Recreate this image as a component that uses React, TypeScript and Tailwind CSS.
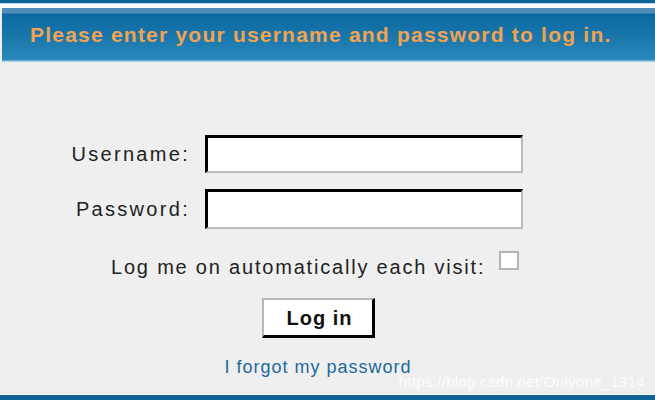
import React from 'react'

export default function App() {
    return (
        <div className="w-[655px] h-[400px] bg-[#efefef] flex flex-col overflow-hidden font-['Liberation_Sans',Arial,sans-serif]">
            {/* top rule */}
            <div className="h-[3px] bg-[#0e6399]" />
            <div className="h-[1px] bg-[#bcd6e8]" />
            <div className="h-[4px] bg-white" />

            {/* header */}
            <div className="h-[54px] ml-[2px] flex items-center pl-[28px] bg-[linear-gradient(to_bottom,#4f8db8_0px,#4f8db8_5px,#0b69a0_6px,#1a78ad_30px,#2b88bb_52px,#a9cfe6_53px)]">
                <h1 className="text-[21px] font-bold text-[#f3a250] tracking-[1.22px]">
                    Please enter your username and password to log in.
                </h1>
            </div>

            {/* form */}
            <div className="flex-1 flex flex-col pt-[73px]">
                <div className="grid grid-cols-[190px_318px] gap-x-[15px] gap-y-[16px] items-center">
                    <label className="text-right text-[20px] text-[#222] tracking-[2.3px]">Username:</label>
                    <input className="h-[38px] bg-white border-t-[3px] border-l-[3px] border-b-[2px] border-r-[2px] border-t-black border-l-black border-b-[#bbbbbb] border-r-[#bbbbbb] outline-none" />
                    <label className="text-right text-[20px] text-[#222] tracking-[2.3px]">Password:</label>
                    <input type="password" className="h-[40px] bg-white border-t-[3px] border-l-[3px] border-b-[2px] border-r-[2px] border-t-black border-l-black border-b-[#bbbbbb] border-r-[#bbbbbb] outline-none" />
                </div>

                <div className="flex items-center pl-[111px] mt-[28px] h-[20px]">
                    <span className="text-[20px] text-[#222] tracking-[1.8px] whitespace-nowrap">Log me on automatically each visit:</span>
                    <span className="ml-[14px] -mt-[14px] w-[20px] h-[19px] shrink-0 bg-white border-2 border-[#b4b4b4]" />
                </div>

                <div className="w-[636px] flex flex-col items-center mt-[21px]">
                    <button className="w-[113px] h-[40px] pl-[4px] bg-white border-t-2 border-l-2 border-t-[#b8b8b8] border-l-[#b8b8b8] border-b-[3px] border-r-[3px] border-b-black border-r-black text-[20px] font-bold text-[#111] tracking-[1px]">
                        Log in
                    </button>
                    <a href="#" className="mt-[16px] text-[18px] text-[#1b6a9c] tracking-[1px]">I forgot my password</a>
                </div>

                <div className="self-end mr-[10px] -mt-[10px] text-[15px] text-white/80 tracking-[0.3px]">
                    https://blog.csdn.net/Onlyone_1314
                </div>
            </div>

            {/* bottom rule */}
            <div className="h-[1px] bg-white" />
            <div className="h-[5px] bg-[#0e6399]" />
        </div>
    );
}
